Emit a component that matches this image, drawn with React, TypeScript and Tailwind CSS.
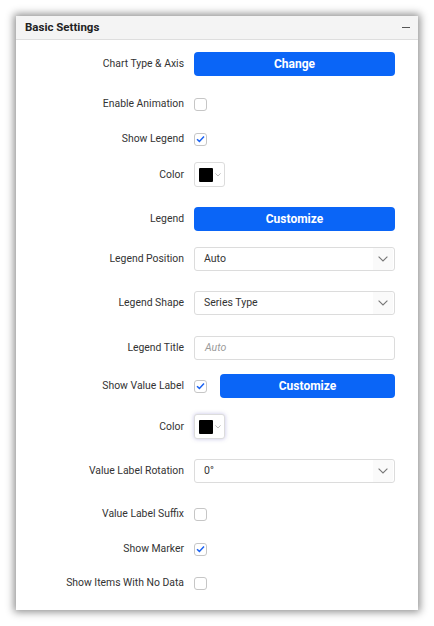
import { ReactNode } from "react";

const font = { fontFamily: "Roboto, 'Noto Sans', sans-serif" };

const Chevron = ({ size = 10, className = "" }: { size?: number; className?: string }) => (
  <svg width={size} height={size * 0.6} viewBox="0 0 10 6" className={className}>
    <path d="M0.6 0.6 L5 5 L9.4 0.6" fill="none" stroke="currentColor" strokeWidth="1.1" />
  </svg>
);

const Checkbox = ({ checked = false }: { checked?: boolean }) => (
  <div className="w-[13px] h-[13px] rounded-[3px] border border-[#c6c6c6] bg-white flex items-center justify-center">
    {checked && (
      <svg width="9" height="8" viewBox="0 0 9 8">
        <path d="M1 4.2 L3.4 6.4 L8 1.4" fill="none" stroke="#1a62f2" strokeWidth="1.5" />
      </svg>
    )}
  </div>
);

const Button = ({ children, className = "w-[201px]" }: { children: ReactNode; className?: string }) => (
  <div
    className={`${className} h-[24px] rounded-[4px] bg-[#0a65f7] text-white text-[12px] font-bold flex items-center justify-center`}
  >
    {children}
  </div>
);

const Swatch = ({ focused = false }: { focused?: boolean }) => (
  <div
    className={`w-[31px] h-[25px] rounded-[3px] border border-[#dcdcdc] bg-white flex items-center pl-[4px] gap-[2px] ${
      focused ? "shadow-[0_0_4px_rgba(90,80,180,0.35)]" : ""
    }`}
  >
    <div className="w-[14px] h-[14px] bg-black rounded-[1px]" />
    <Chevron size={6} className="text-[#9a9a9a]" />
  </div>
);

const Select = ({ value }: { value: string }) => (
  <div className="w-[201px] h-[24px] rounded-[3px] border border-[#dcdcdc] bg-white flex items-center text-[10.5px] text-[#333]">
    <span className="flex-1 pl-[9px]">{value}</span>
    <div className="w-[20px] h-full flex items-center justify-center bg-[#fafafa] rounded-r-[3px] mr-[1px]">
      <Chevron size={10} className="text-[#777]" />
    </div>
  </div>
);

const Input = ({ placeholder }: { placeholder: string }) => (
  <div className="w-[201px] h-[24px] rounded-[3px] border border-[#dcdcdc] bg-white flex items-center text-[10.5px] italic text-[#9a9a9a] pl-[10px]">
    {placeholder}
  </div>
);

const Row = ({ label, mt, children, h = "h-[24px]" }: { label: string; mt: string; children: ReactNode; h?: string }) => (
  <div className={`flex items-center ${h} ${mt}`}>
    <div className="w-[168px] text-right text-[10.4px] text-[#333] whitespace-nowrap">{label}</div>
    <div className="ml-[10px] flex items-center">{children}</div>
  </div>
);

export default function App() {
  return (
    <div className="w-[434px] h-[626px] bg-white pt-[16px] pl-[16px]" style={font}>
      <div className="w-[402px] h-[594px] bg-white shadow-[0_0_8px_2px_rgba(0,0,0,0.45)]">
        <div className="h-[24px] bg-[#f4f4f4] border-b border-[#dedede] flex items-center justify-between pl-[9px] pr-[8px]">
          <span className="text-[11.5px] font-bold text-[#222]">Basic Settings</span>
          <div className="w-[8px] h-[1.5px] bg-[#555]" />
        </div>
        <div className="flex flex-col pb-[16px]">
          <Row label="Chart Type & Axis" mt="mt-[12px]">
            <Button>Change</Button>
          </Row>
          <Row label="Enable Animation" mt="mt-[16px]">
            <Checkbox />
          </Row>
          <Row label="Show Legend" mt="mt-[11px]">
            <Checkbox checked />
          </Row>
          <Row label="Color" mt="mt-[11px]" h="h-[25px]">
            <Swatch />
          </Row>
          <Row label="Legend" mt="mt-[20px]">
            <Button>Customize</Button>
          </Row>
          <Row label="Legend Position" mt="mt-[16px]">
            <Select value="Auto" />
          </Row>
          <Row label="Legend Shape" mt="mt-[20px]">
            <Select value="Series Type" />
          </Row>
          <Row label="Legend Title" mt="mt-[21px]">
            <Input placeholder="Auto" />
          </Row>
          <Row label="Show Value Label" mt="mt-[14px]">
            <Checkbox checked />
            <div className="ml-[13px]">
              <Button className="w-[175px]">Customize</Button>
            </div>
          </Row>
          <Row label="Color" mt="mt-[16px]" h="h-[25px]">
            <Swatch focused />
          </Row>
          <Row label="Value Label Rotation" mt="mt-[20px]">
            <Select value="0°" />
          </Row>
          <Row label="Value Label Suffix" mt="mt-[19px]">
            <Checkbox />
          </Row>
          <Row label="Show Marker" mt="mt-[11px]">
            <Checkbox checked />
          </Row>
          <Row label="Show Items With No Data" mt="mt-[10px]">
            <Checkbox />
          </Row>
        </div>
      </div>
    </div>
  );
}
